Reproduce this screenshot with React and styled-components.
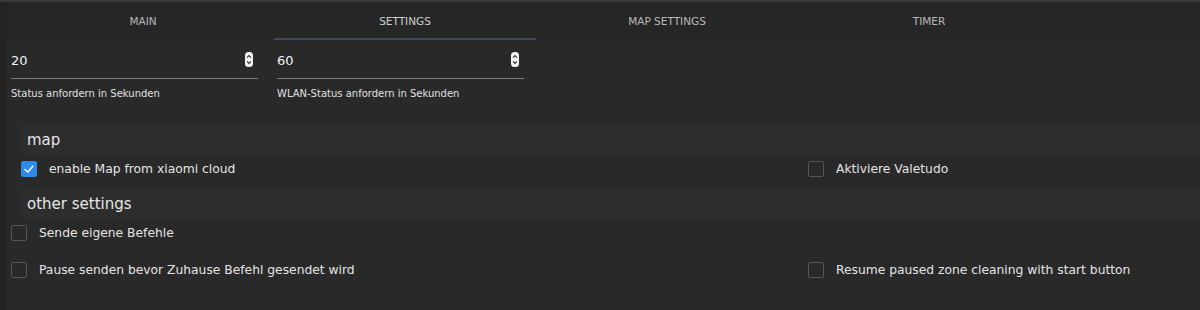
import styled, { createGlobalStyle } from "styled-components";

const GlobalStyle = createGlobalStyle`
  html, body {
    margin: 0;
    padding: 0;
    background: #292929;
  }
  body {
    font-family: "DejaVu Sans", "Liberation Sans", sans-serif;
    color: #e2e2e2;
  }
`;

const tabs = ["MAIN", "SETTINGS", "MAP SETTINGS", "TIMER"];

function Spinner() {
  return (
    <svg width="8" height="15" viewBox="0 0 8 15">
      <rect x="0" y="0" width="8" height="15" rx="3.5" fill="#f2f2f2" />
      <path d="M2 5.6 L4 3.6 L6 5.6" fill="none" stroke="#333" strokeWidth="1.1" />
      <path d="M2 9.4 L4 11.4 L6 9.4" fill="none" stroke="#333" strokeWidth="1.1" />
    </svg>
  );
}

function Check({ checked }) {
  return (
    <CheckBox $checked={checked}>
      {checked && (
        <svg width="12" height="12" viewBox="0 0 12 12">
          <path d="M2 6.4 L4.8 9 L10 3" fill="none" stroke="#fff" strokeWidth="1.4" strokeLinecap="round" strokeLinejoin="round" />
        </svg>
      )}
    </CheckBox>
  );
}

function Option({ label, checked }) {
  return (
    <OptionRow>
      <Check checked={checked} />
      <p>{label}</p>
    </OptionRow>
  );
}

export default function App() {
  return (
    <>
      <GlobalStyle />
      <Page>
        <LeftStrip />
        <Main>
          <TabBar>
            {tabs.map((t, i) => (
              <Tab key={t} $active={i === 1}>
                {t}
              </Tab>
            ))}
          </TabBar>

          <FieldRow>
            <Field>
              <InputLine>
                <span>20</span>
                <Spinner />
              </InputLine>
              <Helper>Status anfordern in Sekunden</Helper>
            </Field>
            <Field>
              <InputLine>
                <span>60</span>
                <Spinner />
              </InputLine>
              <Helper>WLAN-Status anfordern in Sekunden</Helper>
            </Field>
          </FieldRow>

          <SectionHead $top={24}>map</SectionHead>
          <OptionGrid $indent={14}>
            <Option label="enable Map from xiaomi cloud" checked />
            <Option label="Aktiviere Valetudo" />
          </OptionGrid>

          <SectionHead $top={5}>other settings</SectionHead>
          <OptionGrid $indent={4}>
            <Option label="Sende eigene Befehle" />
            <span />
            <Option label="Pause senden bevor Zuhause Befehl gesendet wird" />
            <Option label="Resume paused zone cleaning with start button" />
          </OptionGrid>
        </Main>
      </Page>
    </>
  );
}

const Page = styled.div`
  display: flex;
  height: 310px;
  border-top: 2px solid #3a3a3a;
  box-sizing: border-box;
  overflow: hidden;
`;

const LeftStrip = styled.div`
  width: 7px;
  background: #232323;
`;

const Main = styled.div`
  flex: 1;
  display: flex;
  flex-direction: column;
`;

const TabBar = styled.nav`
  display: flex;
  height: 38px;
  padding-left: 5px;
  background: #262626;
`;

const Tab = styled.div`
  width: 262px;
  display: flex;
  align-items: center;
  justify-content: center;
  box-sizing: border-box;
  padding-top: 2px;
  font-size: 10.5px;
  color: ${(p) => (p.$active ? "#cfcfcf" : "#b9b9b9")};
  border-bottom: 2px solid ${(p) => (p.$active ? "#3c4b5c" : "transparent")};
`;

const FieldRow = styled.div`
  display: flex;
  gap: 19px;
  padding-left: 4px;
`;

const Field = styled.div`
  width: 247px;
`;

const InputLine = styled.div`
  display: flex;
  align-items: center;
  justify-content: space-between;
  height: 38px;
  padding-right: 5px;
  border-bottom: 1px solid #7c7c7c;
  font-size: 13px;
  color: #f0f0f0;

  span {
    padding-top: 2px;
  }
`;

const Helper = styled.div`
  margin-top: 8px;
  font-size: 10px;
  line-height: 14px;
  color: #e0e0e0;
`;

const SectionHead = styled.div`
  margin-top: ${(p) => p.$top}px;
  margin-left: 13px;
  height: 29px;
  display: flex;
  align-items: center;
  padding-left: 7px;
  background: #2d2d2d;
  font-size: 15px;
  color: #e6e6e6;
`;

const OptionGrid = styled.div`
  display: grid;
  grid-template-columns: ${(p) => 801 - p.$indent}px 1fr;
  row-gap: 7px;
  padding-left: ${(p) => p.$indent}px;
`;

const OptionRow = styled.div`
  display: flex;
  align-items: center;
  gap: 12px;
  height: 30px;

  p {
    margin: 0;
    font-size: 12.3px;
    color: #e4e4e4;
  }
`;

const CheckBox = styled.span`
  width: 16px;
  height: 16px;
  box-sizing: border-box;
  border-radius: 2px;
  display: flex;
  align-items: center;
  justify-content: center;
  flex-shrink: 0;
  background: ${(p) => (p.$checked ? "#2e8ae8" : "transparent")};
  border: ${(p) => (p.$checked ? "none" : "1.5px solid #555")};
`;
